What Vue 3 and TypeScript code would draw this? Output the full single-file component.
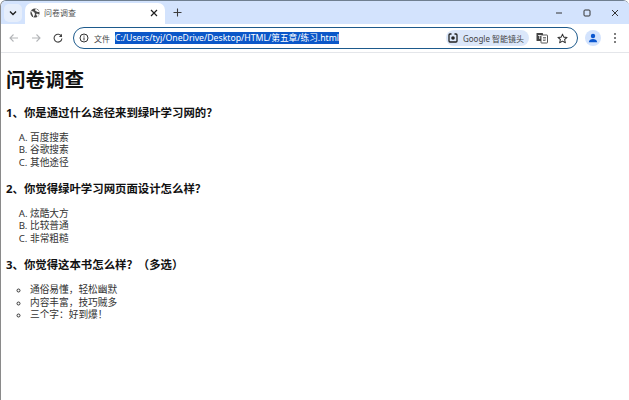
<script setup lang="ts">
interface Q { title: string; kind: 'ol' | 'ul'; items: string[] }
const questions: Q[] = [
  { title: '1、你是通过什么途径来到绿叶学习网的？', kind: 'ol', items: ['百度搜索', '谷歌搜索', '其他途径'] },
  { title: '2、你觉得绿叶学习网页面设计怎么样？', kind: 'ol', items: ['炫酷大方', '比较普通', '非常粗糙'] },
  { title: '3、你觉得这本书怎么样？（多选）', kind: 'ul', items: ['通俗易懂，轻松幽默', '内容丰富，技巧贼多', '三个字：好到爆！'] },
]
</script>

<template>
  <div class="window">
    <div class="tabstrip">
      <button class="tabsearch">
        <svg width="10" height="10" viewBox="0 0 10 10"><path d="M2 3.5 5 6.5 8 3.5" fill="none" stroke="#1f1f1f" stroke-width="1.4"/></svg>
      </button>
      <div class="tab">
        <svg class="globe" width="10" height="10" viewBox="0 0 10 10">
          <circle cx="5" cy="5" r="4.6" fill="#474747"/>
          <path d="M1.2 3.2 4 4.4 4.6 6.4 3.4 8.8M6 .8 5.6 2.6 8 3.6 9.4 3.2M6.6 6 8.6 6.6 7.6 8.6Z" fill="#fff" stroke="#fff" stroke-width=".9"/>
        </svg>
        <span class="tabtitle">问卷调查</span>
        <svg class="tabclose" width="8" height="8" viewBox="0 0 8 8"><path d="M1 1 7 7M7 1 1 7" stroke="#1f1f1f" stroke-width="1.2"/></svg>
      </div>
      <svg class="newtab" width="9" height="9" viewBox="0 0 9 9"><path d="M4.500 .5V8.500M.5 4.500H8.500" stroke="#3c3c3c" stroke-width="1.100"/></svg>
      <div class="winctrls">
        <svg width="8" height="8" viewBox="0 0 8 8"><path d="M1 4H7" stroke="#333" stroke-width="1"/></svg>
        <svg width="8" height="8" viewBox="0 0 8 8"><rect x="1" y="1" width="6" height="6" rx="1" fill="none" stroke="#333" stroke-width="1"/></svg>
        <svg width="8" height="8" viewBox="0 0 8 8"><path d="M1 1 7 7M7 1 1 7" stroke="#333" stroke-width="1"/></svg>
      </div>
    </div>

    <div class="toolbar">
      <svg class="navicon first" width="10" height="10" viewBox="0 0 10 10"><path d="M9 5H1.500M4.500 1.500 1 5l3.500 3.500" fill="none" stroke="#b3b5b8" stroke-width="1.100"/></svg>
      <svg class="navicon" width="10" height="10" viewBox="0 0 10 10"><path d="M1 5H8.500M5.500 1.500 9 5 5.500 8.500" fill="none" stroke="#b3b5b8" stroke-width="1.100"/></svg>
      <svg class="navicon" width="10" height="10" viewBox="0 0 10 10"><path d="M8.500 3.400A3.900 3.900 0 1 0 8.900 5.500" fill="none" stroke="#444" stroke-width="1.100"/><path d="M9 .8V4H5.800Z" fill="#444"/></svg>
      <div class="omnibox">
        <svg class="info" width="10" height="10" viewBox="0 0 10 10"><circle cx="5" cy="5" r="4" fill="none" stroke="#333" stroke-width="1"/><path d="M5 4.400V7.400M5 2.600V3.600" stroke="#333" stroke-width="1"/></svg>
        <span class="scheme">文件</span>
        <span class="url">C:/Users/tyj/OneDrive/Desktop/HTML/第五章/练习.html</span>
        <div class="lens">
          <svg width="10" height="10" viewBox="0 0 10 10"><path d="M3.500 1H2A1 1 0 0 0 1 2V8A1 1 0 0 0 2 9H8A1 1 0 0 0 9 8V2A1 1 0 0 0 8 1H6.500" fill="none" stroke="#222" stroke-width="1.300"/><circle cx="5" cy="5" r="1.800" fill="#222"/></svg>
          <span>Google 智能镜头</span>
        </div>
        <svg class="translate" width="12" height="12" viewBox="0 0 12 12"><rect x=".5" y="1" width="6.500" height="8" rx=".6" fill="#444"/><rect x="5" y="3" width="6.500" height="8" rx=".6" fill="#fff" stroke="#444" stroke-width=".9"/><path d="M7 5.500H10M7 7H10M7 8.500H9.500" stroke="#444" stroke-width=".7"/><path d="M2 3.500H5.500M3.700 3V7" stroke="#fff" stroke-width=".8"/></svg>
        <svg class="star" width="11" height="11" viewBox="0 0 12 12"><path d="M6 1.200 7.400 4.500 11 4.800 8.300 7.100 9.100 10.600 6 8.800 2.900 10.600 3.700 7.100 1 4.800 4.600 4.500Z" fill="none" stroke="#333" stroke-width="1.100" stroke-linejoin="round"/></svg>
      </div>
      <div class="avatar">
        <svg width="10" height="10" viewBox="0 0 10 10"><circle cx="5" cy="3" r="2.200" fill="#0b57d0"/><path d="M.8 9.200C1 6.800 3 6 5 6s4 .8 4.200 3.200Z" fill="#0b57d0"/></svg>
      </div>
      <div class="menu"><i></i><i></i><i></i></div>
    </div>

    <main class="page">
      <h1>问卷调查</h1>
      <template v-for="q in questions" :key="q.title">
        <h3>{{ q.title }}</h3>
        <ol v-if="q.kind === 'ol'" type="A"><li v-for="i in q.items" :key="i">{{ i }}</li></ol>
        <ul v-else><li v-for="i in q.items" :key="i">{{ i }}</li></ul>
      </template>
    </main>
  </div>
</template>

<style>
html, body { margin: 0; background: #fff; }
</style>

<style scoped>
.window {
  width: 629px; height: 400px; box-sizing: border-box; overflow: hidden;
  display: flex; flex-direction: column; position: relative;
  border-left: 1px solid #8a8a8a; border-top: 1px solid #6f7f90; border-top-left-radius: 6px; border-top-right-radius: 6px;
  font-family: "Noto Sans", "Noto Sans CJK SC", sans-serif; background: #fff; color: #1a1a1a;
}
.tabstrip { height: 23px; background: #d3e3fd; display: flex; align-items: flex-end; flex: none; }
.tabsearch {
  width: 18px; height: 18px; margin: 0 2px 2px 3px; padding: 0; border: 0; border-radius: 5px; background: #e6eefb;
  display: flex; align-items: center; justify-content: center;
}
.tab {
  width: 140px; height: 21px; margin-left: 1px; box-sizing: border-box; padding: 0 7px 2px 5px; background: #fff; border-radius: 7px 7px 0 0;
  display: flex; align-items: center; gap: 5px;
}
.globe { flex: none; }
.tabtitle { flex: 1; font-size: 8px; color: #555; margin-left: -1px; }
.tabclose { flex: none; }
.newtab { margin: 0 0 7px 8px; }
.winctrls { margin: 0 10px 7px auto; display: flex; gap: 20px; }
.toolbar { height: 28px; flex: none; display: flex; align-items: center; background: #fff; border-bottom: 1px solid #e4e6ea; box-sizing: content-box; }
.navicon { margin-left: 12px; flex: none; }
.navicon.first { margin-left: 8px; }
.omnibox {
  width: 505px; height: 22px; box-sizing: border-box; margin-left: 10px; flex: none; border: 1.500px solid #1d5a8c; border-radius: 11px;
  display: flex; align-items: center; padding: 0 9px 0 5px;
}
.info { flex: none; }
.scheme { font-size: 8px; color: #444; margin-left: 5px; }
.url { font-size: 8.700px; margin-left: 5px; background: #0b57c8; color: #fff; line-height: 12px; white-space: nowrap; }
.lens {
  margin-left: auto; height: 16px; padding: 0 5px 0 2px; border-radius: 8px; background: #dbe7fa; display: flex; align-items: center; gap: 5px;
  font-size: 8px; color: #444; white-space: nowrap;
}
.translate { margin-left: 7px; flex: none; }
.star { margin-left: 9px; flex: none; }
.avatar { margin-left: 7px; width: 16px; height: 16px; border-radius: 50%; background: #d3e3fd; display: flex; align-items: center; justify-content: center; flex: none; }
.menu { margin-left: 13px; display: flex; flex-direction: column; gap: 2px; }
.menu i { width: 2px; height: 2px; border-radius: 50%; background: #555; display: block; }
.page { padding: 0 5px; flex: 1; font-size: 9.700px; line-height: 12.500px; color: #333; }
h1 { font-size: 19.500px; line-height: 27px; font-weight: 700; margin: 13px 0 0; color: #111; }
h3 { font-size: 11.400px; line-height: 14px; font-weight: 700; margin: 12.700px 0 0; color: #111; }
ol, ul { margin: 12px 0 0; padding: 0 0 0 24px; }
ol { list-style-type: upper-alpha; }
ul { list-style-type: circle; }
li { height: 12.500px; }
</style>
